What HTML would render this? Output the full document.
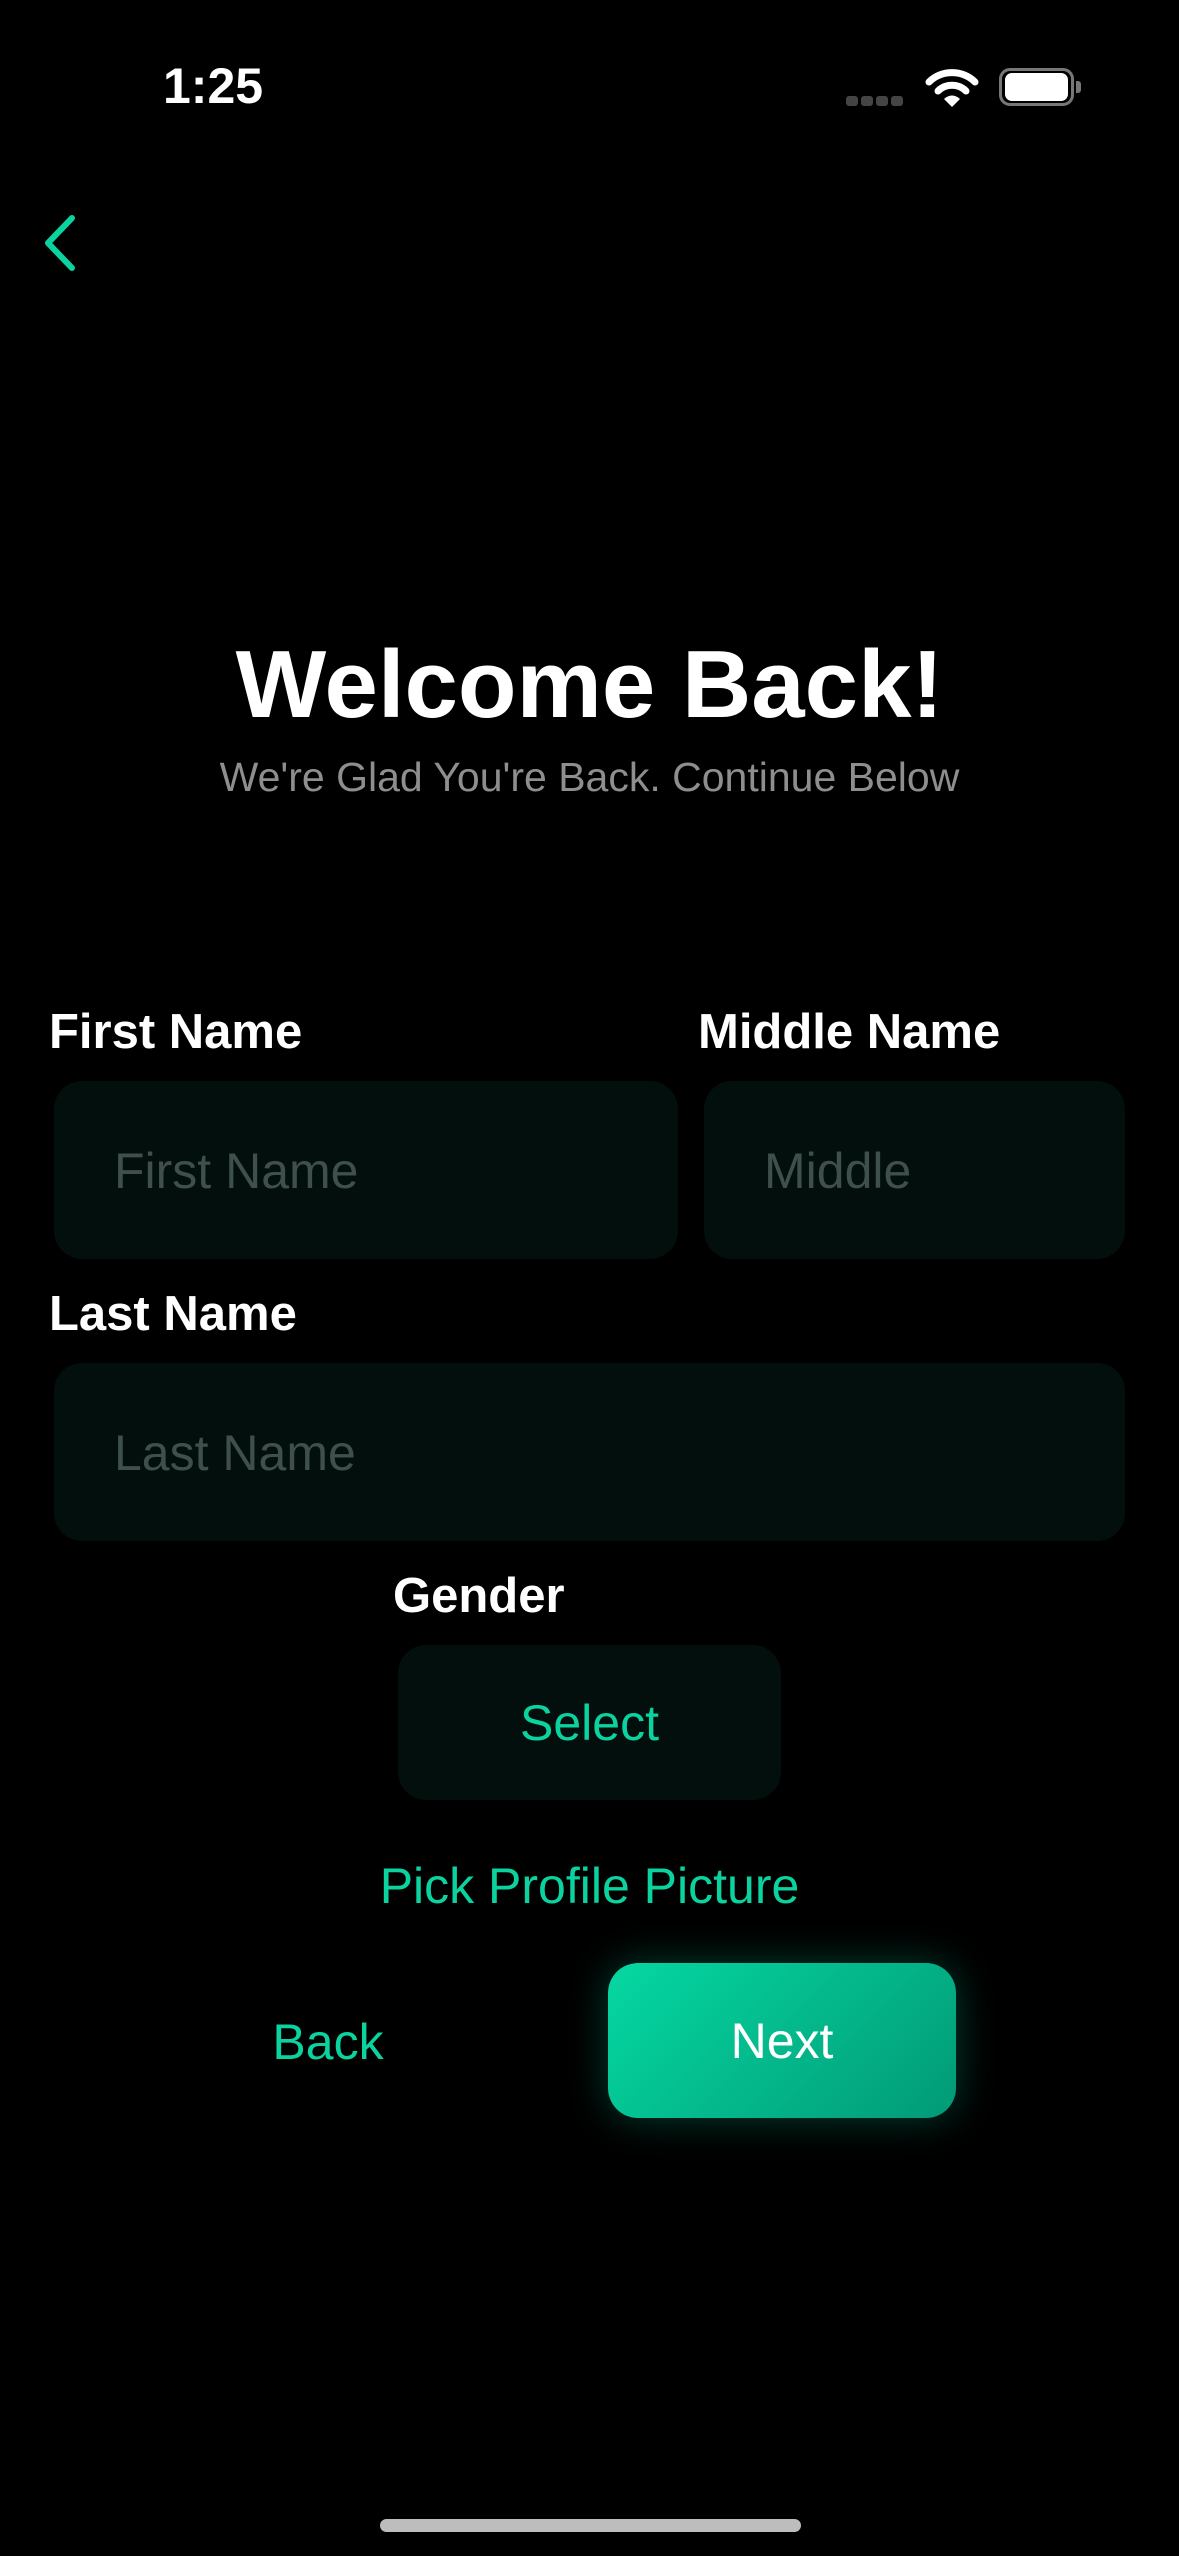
<!DOCTYPE html>
<html><head><meta charset="utf-8"><style>
*{margin:0;padding:0;box-sizing:border-box}
body{width:1179px;height:2556px;background:#000;position:relative;overflow:hidden;font-family:"Liberation Sans",sans-serif}
.a{position:absolute}
.lbl{color:#fff;font-size:49px;font-weight:bold;line-height:1}
.inp{background:#020f0d;border-radius:28px}
.ph{color:#3e4f4c;font-size:50px;line-height:1}
.g{color:#0bd39f}
</style></head><body>
<div class="a" style="left:163px;top:60px;color:#fff;font-size:50px;font-weight:bold;line-height:52px">1:25</div>
<div class="a" style="left:846px;top:96px;width:12px;height:10px;background:#444;border-radius:3px"></div>
<div class="a" style="left:861px;top:96px;width:12px;height:10px;background:#444;border-radius:3px"></div>
<div class="a" style="left:876px;top:96px;width:12px;height:10px;background:#444;border-radius:3px"></div>
<div class="a" style="left:891px;top:96px;width:12px;height:10px;background:#444;border-radius:3px"></div>
<svg class="a" style="left:925px;top:66px" width="54" height="42" viewBox="0 0 54 42">
<path d="M4 16 A33 33 0 0 1 50 16" stroke="#fff" stroke-width="7" fill="none" stroke-linecap="round"/>
<path d="M13 25 A20 20 0 0 1 41 25" stroke="#fff" stroke-width="7" fill="none" stroke-linecap="round"/>
<path d="M19 33 L27 41 L35 33 A11 11 0 0 0 19 33Z" fill="#fff"/></svg>
<div class="a" style="left:999px;top:68px;width:75px;height:38px;border:3px solid #777;border-radius:11px"></div>
<div class="a" style="left:1005px;top:73px;width:63px;height:28px;background:#fff;border-radius:7px"></div>
<div class="a" style="left:1076px;top:81px;width:5px;height:12px;background:#777;border-radius:0 3px 3px 0"></div>
<svg class="a" style="left:36px;top:210px" width="46" height="66" viewBox="0 0 46 66"><path d="M36 8 L12 33 L36 58" stroke="#0bd39f" stroke-width="6" fill="none" stroke-linecap="round" stroke-linejoin="round"/></svg>
<div class="a" style="left:0;width:1179px;top:630px;text-align:center;color:#fff;font-size:96px;font-weight:bold;line-height:110px">Welcome Back!</div>
<div class="a" style="left:0;width:1179px;top:754px;text-align:center;color:#8e8e8e;font-size:41px;line-height:46px">We're Glad You're Back. Continue Below</div>
<div class="a lbl" style="left:49px;top:1008px">First Name</div>
<div class="a lbl" style="left:698px;top:1008px">Middle Name</div>
<div class="a inp" style="left:54px;top:1081px;width:624px;height:178px"></div>
<div class="a ph" style="left:114px;top:1146px">First Name</div>
<div class="a inp" style="left:704px;top:1081px;width:421px;height:178px"></div>
<div class="a ph" style="left:764px;top:1146px">Middle</div>
<div class="a lbl" style="left:49px;top:1290px">Last Name</div>
<div class="a inp" style="left:54px;top:1363px;width:1071px;height:178px"></div>
<div class="a ph" style="left:114px;top:1428px">Last Name</div>
<div class="a lbl" style="left:393px;top:1572px">Gender</div>
<div class="a inp" style="left:398px;top:1645px;width:383px;height:155px"></div>
<div class="a g" style="left:398px;width:383px;top:1697px;text-align:center;font-size:50px;line-height:52px">Select</div>
<div class="a g" style="left:0;width:1179px;top:1860px;text-align:center;font-size:50px;line-height:52px">Pick Profile Picture</div>
<div class="a g" style="left:228px;width:200px;top:2016px;text-align:center;font-size:50px;line-height:52px">Back</div>
<div class="a" style="left:608px;top:1963px;width:348px;height:155px;border-radius:30px;background:linear-gradient(135deg,#05d8a2,#029a76);box-shadow:0 0 40px rgba(10,210,160,0.3)"></div>
<div class="a" style="left:608px;width:348px;top:2015px;text-align:center;color:#fff;font-size:50px;line-height:52px">Next</div>
<div class="a" style="left:380px;top:2519px;width:421px;height:13px;background:#bdbdbd;border-radius:7px"></div>
</body></html>
